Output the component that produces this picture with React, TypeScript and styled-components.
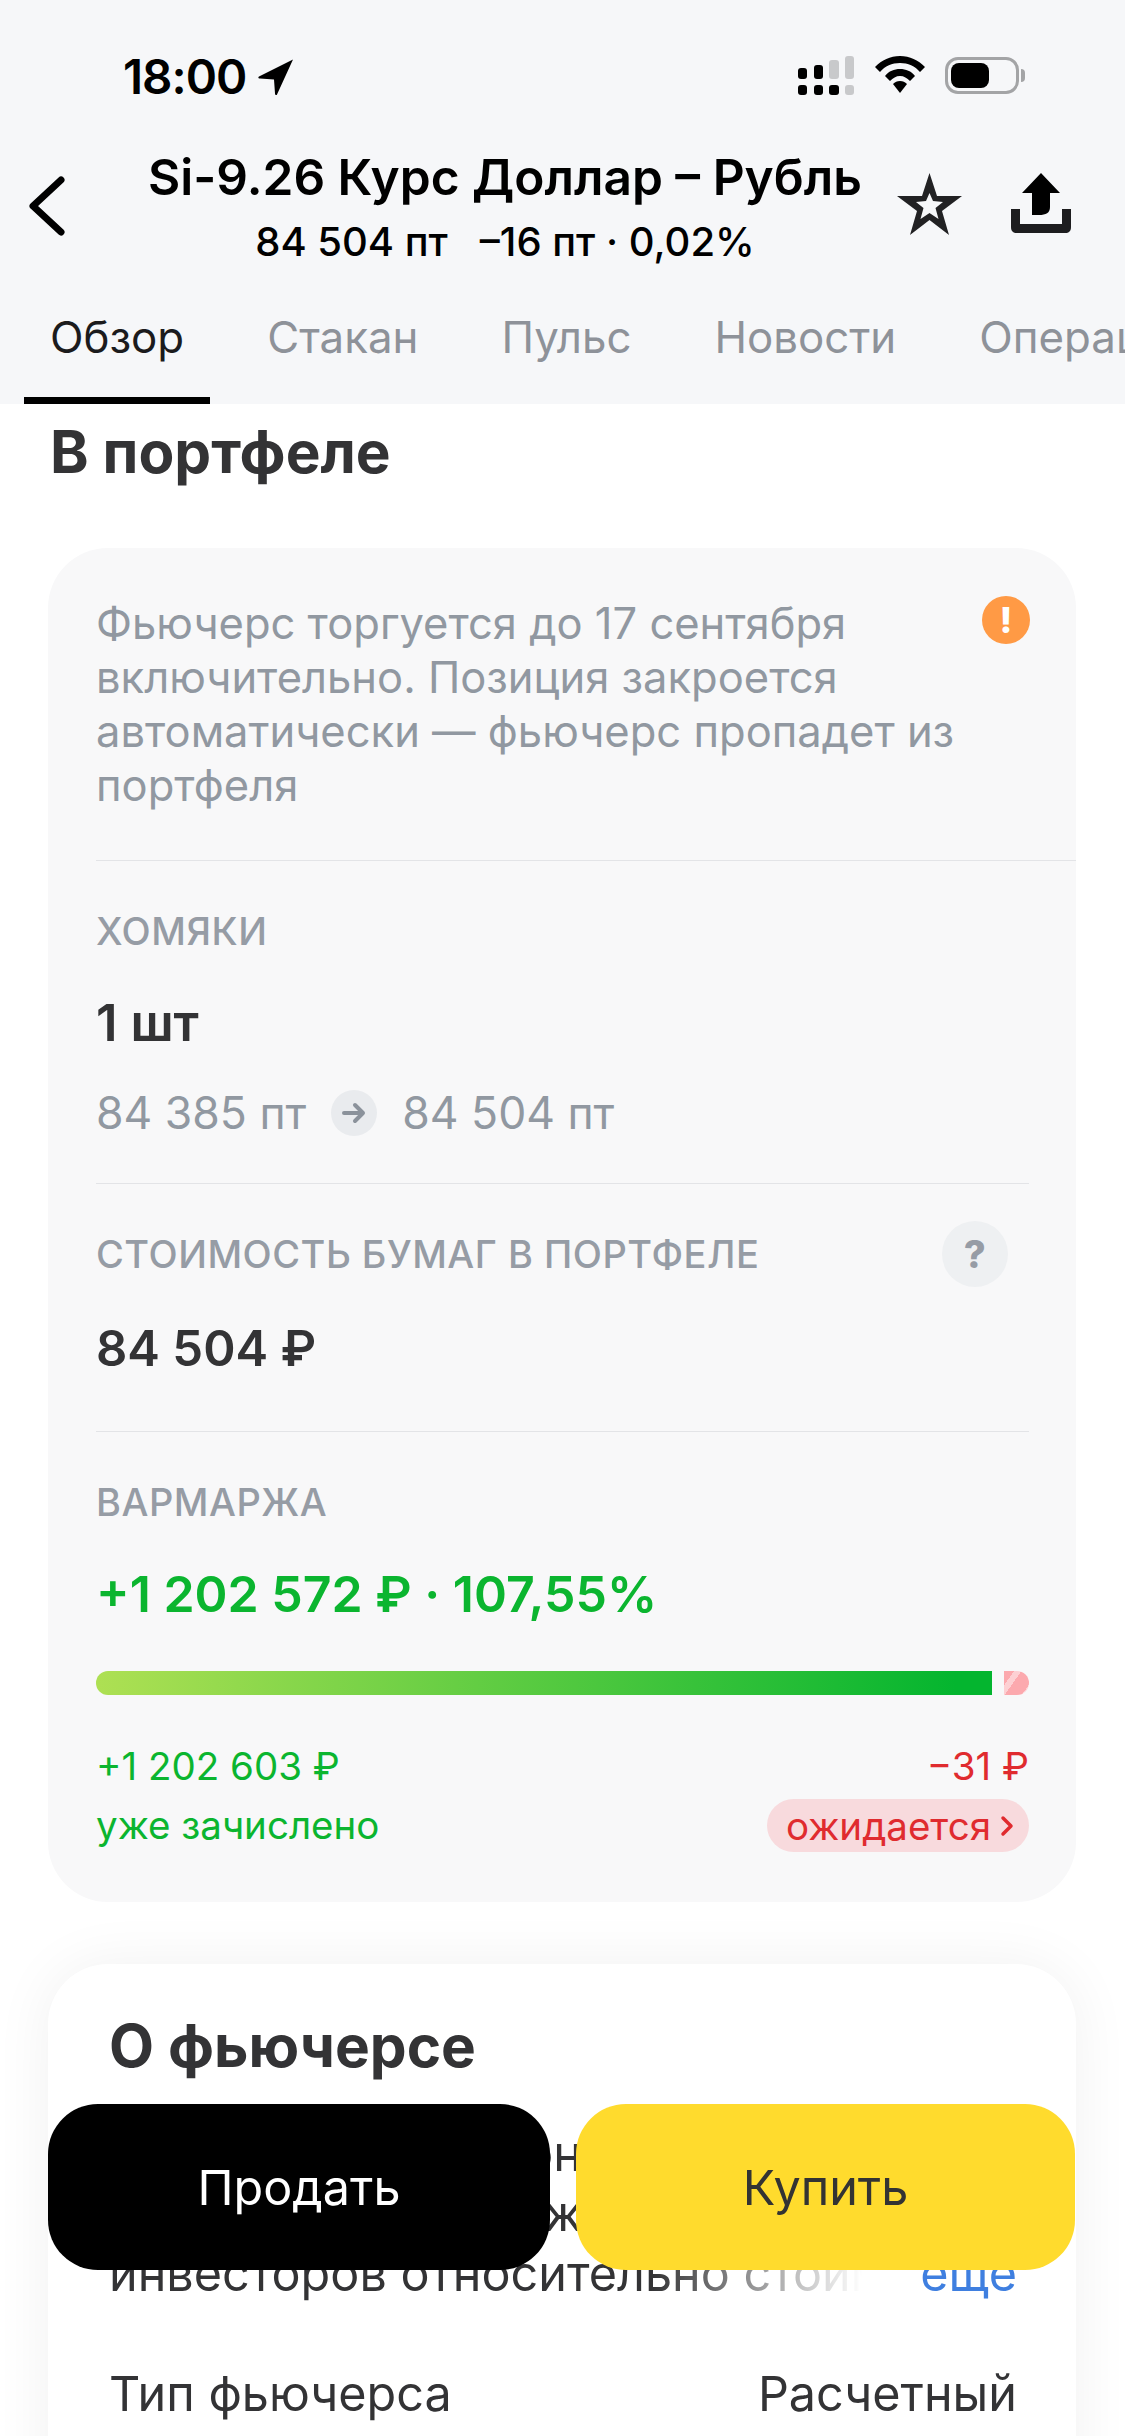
import styled, { createGlobalStyle } from 'styled-components';

const GlobalStyle = createGlobalStyle`
  html, body {
    margin: 0;
    padding: 0;
    background: #ffffff;
    font-family: Inter, "Noto Sans", sans-serif;
  }
  * { box-sizing: border-box; }
`;

const Screen = styled.div`
  position: relative;
  width: 1125px;
  height: 2436px;
  overflow: hidden;
  background: #ffffff;
`;

const Header = styled.header`
  height: 404px;
  background: #f6f7f9;
  display: flex;
  flex-direction: column;
`;

const StatusBar = styled.div`
  height: 148px;
  padding: 50px 106px 0 123px;
  display: flex;
  justify-content: space-between;
  align-items: flex-start;
`;

const Time = styled.div`
  display: flex;
  align-items: center;
  gap: 12px;
  height: 52px;
  font-size: 47.5px;
  font-weight: 600;
  color: #000;
  letter-spacing: -1px;
`;

const StatusIcons = styled.div`
  display: flex;
  align-items: flex-start;
  gap: 20px;
  margin-top: 6px;
`;

const Battery = styled.div`
  position: relative;
  width: 74px;
  height: 37px;
  margin-top: 1px;
  border: 3px solid #a3a4a6;
  border-radius: 13px;
  padding: 3px;

  &::before {
    content: '';
    display: block;
    width: 38px;
    height: 25px;
    background: #000;
    border-radius: 8px;
  }

  &::after {
    content: '';
    position: absolute;
    right: -9px;
    top: 9px;
    width: 4px;
    height: 13px;
    background: #a3a4a6;
    border-radius: 0 4px 4px 0;
  }
`;

const NavRow = styled.div`
  height: 116px;
  padding: 0 54px 0 28px;
  display: flex;
  align-items: center;
`;

const Back = styled.div`
  width: 37px;
  height: 60px;
`;

const TitleBlock = styled.div`
  flex: 1;
  text-align: center;
  color: #000;
  padding: 6px 0 0 48px;
`;

const Title = styled.div`
  font-size: 49.6px;
  line-height: 62px;
  font-weight: 600;
  white-space: nowrap;
`;

const Subtitle = styled.div`
  margin-top: 3px;
  font-size: 40px;
  line-height: 62px;
  font-weight: 500;
  white-space: nowrap;
`;

const NavActions = styled.div`
  display: flex;
  gap: 49px;
  margin-top: -4px;
`;

const Tabs = styled.nav`
  flex: 1;
  display: flex;
  gap: 31px;
  padding: 24px 0 0 24px;
  overflow: hidden;
`;

const Tab = styled.div<{ $active?: boolean }>`
  height: 116px;
  padding: 24px 26px 0;
  flex: none;
  font-size: 43.8px;
  line-height: 52px;
  color: ${(p) => (p.$active ? '#1b1b1d' : '#8e9299')};
  border-bottom: 7px solid ${(p) => (p.$active ? '#000' : 'transparent')};
`;

const Content = styled.main`
  padding: 0 49px 0 48px;
`;

const SectionTitle = styled.h2`
  margin: 16px 0 0 2px;
  height: 64px;
  font-size: 58.5px;
  line-height: 64px;
  font-weight: 700;
  color: #333335;
`;

const InfoCard = styled.section`
  margin-top: 64px;
  height: 1354px;
  padding: 48px 47px 0 48px;
  background: #f8f8f9;
  border-radius: 60px;
`;

const Notice = styled.div`
  position: relative;
  margin: 0 -47px 0 0;
  padding-bottom: 48px;
  border-bottom: 1px solid #e3e4e7;
  font-size: 43.5px;
  line-height: 54px;
  color: #9198a1;
`;

const WarnBadge = styled.div`
  position: absolute;
  top: 0;
  right: 46px;
  width: 48px;
  height: 48px;
  border-radius: 50%;
  background: #ff9a45;
  color: #fff;
  font-size: 36px;
  font-weight: 800;
  line-height: 48px;
  text-align: center;
`;

const Block = styled.div<{ $height: number; $last?: boolean }>`
  height: ${(p) => p.$height}px;
  padding-top: 48px;
  border-bottom: ${(p) => (p.$last ? 'none' : '1px solid #e3e4e7')};
`;

const Label = styled.div`
  display: flex;
  justify-content: space-between;
  height: 44px;
  align-items: center;
  font-size: 38px;
  font-weight: 500;
  color: #969ca5;
  letter-spacing: 0.5px;
`;

const HelpBadge = styled.div`
  width: 66px;
  height: 66px;
  margin-right: 21px;
  border-radius: 50%;
  background: #eef0f2;
  color: #969ca5;
  font-size: 38px;
  font-weight: 800;
  line-height: 66px;
  text-align: center;
`;

const Value = styled.div<{ $top: number; $size: number; $color?: string }>`
  margin-top: ${(p) => p.$top}px;
  font-size: ${(p) => p.$size}px;
  line-height: 60px;
  font-weight: 600;
  color: ${(p) => p.$color || '#333335'};
  white-space: nowrap;
`;

const PriceRow = styled.div`
  margin-top: 30px;
  display: flex;
  align-items: center;
  gap: 25px;
  font-size: 44.5px;
  line-height: 60px;
  color: #9198a1;
`;

const ArrowCircle = styled.div`
  width: 46px;
  height: 46px;
  border-radius: 50%;
  background: #e9ebee;
  display: flex;
  align-items: center;
  justify-content: center;
`;

const Bar = styled.div`
  margin-top: 47px;
  height: 24px;
  display: flex;
  gap: 12px;
`;

const BarFill = styled.div`
  flex: 1;
  background: linear-gradient(90deg, #aee053 0%, #04b52f 96%);
  border-radius: 12px 0 0 12px;
`;

const BarPending = styled.div`
  width: 25px;
  border-radius: 0 12px 12px 0;
  background: repeating-linear-gradient(-55deg, #fdd0d3 0 6px, #fca9ae 6px 20px);
`;

const MarginRows = styled.div`
  margin-top: 45px;
  display: flex;
  justify-content: space-between;
`;

const MarginColumn = styled.div<{ $right?: boolean; $color: string }>`
  display: flex;
  flex-direction: column;
  align-items: ${(p) => (p.$right ? 'flex-end' : 'flex-start')};
  gap: 7px;
  font-size: 38.5px;
  line-height: 52px;
  color: ${(p) => p.$color};
`;

const Pill = styled.div`
  height: 53px;
  padding: 0 15px 0 19px;
  display: flex;
  align-items: center;
  gap: 9px;
  border-radius: 27px;
  background: #f8dadd;
`;

const AboutCard = styled.section`
  margin-top: 62px;
  height: 900px;
  padding: 50px 59px 0 61px;
  background: #ffffff;
  border-radius: 60px;
  box-shadow: 0 0 60px rgba(0, 0, 0, 0.06);
`;

const AboutTitle = styled.h2`
  margin: 0;
  height: 64px;
  font-size: 58.5px;
  line-height: 64px;
  font-weight: 700;
  color: #333335;
`;

const AboutText = styled.div`
  margin-top: 46px;
  font-size: 48.5px;
  line-height: 60px;
  color: #333335;
`;

const TextLine = styled.div`
  white-space: nowrap;
  overflow: hidden;
`;

const LastLine = styled.div`
  display: flex;
  justify-content: space-between;
  white-space: nowrap;
`;

const FadedText = styled.div`
  width: 753px;
  overflow: hidden;
  -webkit-mask-image: linear-gradient(90deg, #000 72%, transparent 100%);
  mask-image: linear-gradient(90deg, #000 72%, transparent 100%);
`;

const More = styled.span`
  color: #3f7fe0;
`;

const ParamRow = styled.div`
  margin-top: 60px;
  display: flex;
  justify-content: space-between;
  font-size: 48.5px;
  line-height: 60px;
  color: #333335;
`;

const Actions = styled.div`
  position: absolute;
  left: 48px;
  top: 2104px;
  width: 1027px;
  display: grid;
  grid-template-columns: 502px 499px;
  gap: 26px;
`;

const ActionButton = styled.div<{ $buy?: boolean }>`
  height: 166px;
  border-radius: 50px;
  display: flex;
  align-items: center;
  justify-content: center;
  font-size: 48.5px;
  background: ${(p) => (p.$buy ? '#ffdb2d' : '#000000')};
  color: ${(p) => (p.$buy ? '#333333' : '#ffffff')};
`;

const SignalIcon = () => (
  <svg width="58" height="39" viewBox="0 0 58 39">
    <g fill="#000">
      <rect x="1" y="12" width="9" height="11" rx="3" />
      <rect x="17" y="9" width="9" height="14" rx="3" />
      <rect x="1" y="29" width="9" height="10" rx="3" />
      <rect x="17" y="29" width="9" height="10" rx="3" />
      <rect x="32" y="29" width="10" height="10" rx="3" />
    </g>
    <g fill="#c8c9cb">
      <rect x="32" y="4" width="10" height="19" rx="3" />
      <rect x="48" y="0" width="9" height="23" rx="3" />
      <rect x="48" y="29" width="9" height="10" rx="3" />
    </g>
  </svg>
);

const WifiIcon = () => (
  <svg width="50" height="37" viewBox="0 0 50 37">
    <path d="M25 0C15 0 7 4 0 11l5 5C10 10 17 7 25 7s15 3 20 9l5-5C43 4 35 0 25 0Z" fill="#000" />
    <path d="M25 13c-6 0-11 2-15 7l5 5c3-3 6-5 10-5s7 2 10 5l5-5c-4-5-9-7-15-7Z" fill="#000" />
    <path d="M25 25c-3 0-5 1-7 3l7 9 7-9c-2-2-4-3-7-3Z" fill="#000" />
  </svg>
);

const LocationIcon = () => (
  <svg width="36" height="37" viewBox="0 0 36 36">
    <path d="M35 1 1 18c-1 1-1 2 1 2l14 1 1 14c0 2 2 2 2 1L35 1Z" fill="#000" />
  </svg>
);

const BackIcon = () => (
  <svg width="37" height="60" viewBox="0 0 37 60">
    <path d="M33 4 5 30l28 26" fill="none" stroke="#000" strokeWidth="7" strokeLinecap="round" strokeLinejoin="round" />
  </svg>
);

const StarIcon = () => (
  <svg width="65" height="62" viewBox="0 0 65 62">
    <path
      fillRule="evenodd"
      d="M32.5 0 40 23h25L45 38l7 24-19.5-15L13 62l7-24L0 23h25L32.5 0Zm0 20L29 28l-10 1 7.5 6-3 11 9-6 9 6-3-11 7.5-6-10-1-3.5-8Z"
      fill="#212123"
    />
  </svg>
);

const ShareIcon = () => (
  <svg width="60" height="60" viewBox="0 0 60 60">
    <path d="M30 0 49 20H39v14c0 6-4 8-11 8h-7V20H11L30 0Z" fill="#000" />
    <path d="M0 36h9v15h42V36h9v18c0 4-2 6-6 6H6c-4 0-6-2-6-6V36Z" fill="#1d1d1f" />
  </svg>
);

const SmallArrow = () => (
  <svg width="24" height="22" viewBox="0 0 24 22">
    <path d="M2 11h19M13 3l8 8-8 8" fill="none" stroke="#8b929b" strokeWidth="4" strokeLinecap="round" strokeLinejoin="round" />
  </svg>
);

const PillChevron = () => (
  <svg width="14" height="22" viewBox="0 0 14 22">
    <path d="M3 3l8 8-8 8" fill="none" stroke="#e02b2f" strokeWidth="3.5" strokeLinecap="round" strokeLinejoin="round" />
  </svg>
);

const App = () => {
  return (
    <Screen>
      <GlobalStyle />
      <Header>
        <StatusBar>
          <Time>
            18:00
            <LocationIcon />
          </Time>
          <StatusIcons>
            <SignalIcon />
            <WifiIcon />
            <Battery />
          </StatusIcons>
        </StatusBar>
        <NavRow>
          <Back>
            <BackIcon />
          </Back>
          <TitleBlock>
            <Title>Si-9.26 Курс Доллар – Рубль</Title>
            <Subtitle>84 504 пт &nbsp;&nbsp;–16 пт · 0,02%</Subtitle>
          </TitleBlock>
          <NavActions>
            <StarIcon />
            <ShareIcon />
          </NavActions>
        </NavRow>
        <Tabs>
          <Tab $active>Обзор</Tab>
          <Tab>Стакан</Tab>
          <Tab>Пульс</Tab>
          <Tab>Новости</Tab>
          <Tab>Операции</Tab>
        </Tabs>
      </Header>
      <Content>
        <SectionTitle>В портфеле</SectionTitle>
        <InfoCard>
          <Notice>
            Фьючерс торгуется до 17 сентября
            <br />
            включительно. Позиция закроется
            <br />
            автоматически — фьючерс пропадет из
            <br />
            портфеля
            <WarnBadge>!</WarnBadge>
          </Notice>
          <Block $height={323}>
            <Label>ХОМЯКИ</Label>
            <Value $top={40} $size={51}>1 шт</Value>
            <PriceRow>
              84 385 пт
              <ArrowCircle>
                <SmallArrow />
              </ArrowCircle>
              84 504 пт
            </PriceRow>
          </Block>
          <Block $height={248}>
            <Label>
              СТОИМОСТЬ БУМАГ В ПОРТФЕЛЕ
              <HelpBadge>?</HelpBadge>
            </Label>
            <Value $top={43} $size={49}>84 504 ₽</Value>
          </Block>
          <Block $height={400} $last>
            <Label>ВАРМАРЖА</Label>
            <Value $top={40} $size={50} $color="#0bb52f">+1 202 572 ₽ · 107,55%</Value>
            <Bar>
              <BarFill />
              <BarPending />
            </Bar>
            <MarginRows>
              <MarginColumn $color="#0bb52f">
                <div>+1 202 603 ₽</div>
                <div>уже зачислено</div>
              </MarginColumn>
              <MarginColumn $right $color="#e02b2f">
                <div>−31 ₽</div>
                <Pill>
                  ожидается
                  <PillChevron />
                </Pill>
              </MarginColumn>
            </MarginRows>
          </Block>
        </InfoCard>
        <AboutCard>
          <AboutTitle>О фьючерсе</AboutTitle>
          <AboutText>
            <TextLine>Фьючерс — это контракт на покупку</TextLine>
            <TextLine>И его цена отображает ожидания</TextLine>
            <LastLine>
              <FadedText>инвесторов относительно стоимости</FadedText>
              <More>еще</More>
            </LastLine>
          </AboutText>
          <ParamRow>
            <span>Тип фьючерса</span>
            <span>Расчетный</span>
          </ParamRow>
        </AboutCard>
      </Content>
      <Actions>
        <ActionButton>Продать</ActionButton>
        <ActionButton $buy>Купить</ActionButton>
      </Actions>
    </Screen>
  );
};

export default App;
